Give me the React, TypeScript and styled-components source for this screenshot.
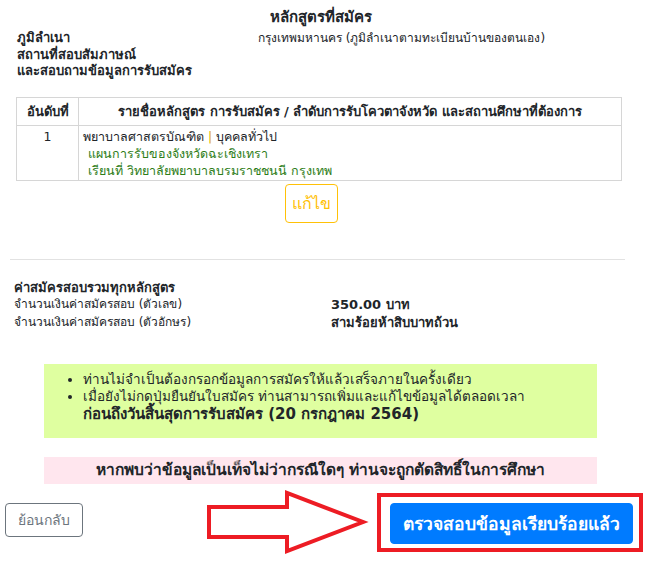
import React from 'react';
import styled, { createGlobalStyle } from 'styled-components';

const GlobalStyle = createGlobalStyle`
  body {
    margin: 0;
    background: white;
    color: #212529;
    font-family: Tahoma, "DejaVu Sans", "Noto Sans", sans-serif;
    font-size: 13px;
  }
`

const course = {
  name: 'พยาบาลศาสตรบัณฑิต',
  type: 'บุคคลทั่วไป',
  plan: 'แผนการรับของจังหวัดฉะเชิงเทรา',
  school: 'เรียนที่ วิทยาลัยพยาบาลบรมราชชนนี กรุงเทพ',
}

export default function App() {
  return <Page>
    <GlobalStyle />
    <Title>หลักสูตรที่สมัคร</Title>
    <Info>
      <div className='label'>ภูมิลำเนา</div>
      <div className='value'>กรุงเทพมหานคร (ภูมิลำเนาตามทะเบียนบ้านของตนเอง)</div>
      <div className='label'>สถานที่สอบสัมภาษณ์<br />และสอบถามข้อมูลการรับสมัคร</div>
      <div></div>
    </Info>

    <Table>
      <thead>
        <tr>
          <th className='no'>อันดับที่</th>
          <th>รายชื่อหลักสูตร การรับสมัคร / ลำดับการรับโควตาจังหวัด และสถานศึกษาที่ต้องการ</th>
        </tr>
      </thead>
      <tbody>
        <tr>
          <td className='no'>1</td>
          <td>
            {course.name} <span className='sep'>|</span> {course.type}
            <div className='sub'>{course.plan}</div>
            <div className='sub'>{course.school}</div>
          </td>
        </tr>
      </tbody>
    </Table>

    <EditRow><EditButton>แก้ไข</EditButton></EditRow>

    <Rule />

    <Fee>
      <div className='head'>ค่าสมัครสอบรวมทุกหลักสูตร</div>
      <div>จำนวนเงินค่าสมัครสอบ (ตัวเลข)</div>
      <div className='value'>350.00 บาท</div>
      <div>จำนวนเงินค่าสมัครสอบ (ตัวอักษร)</div>
      <div className='value'>สามร้อยห้าสิบบาทถ้วน</div>
    </Fee>

    <Notice>
      <ul>
        <li>ท่านไม่จำเป็นต้องกรอกข้อมูลการสมัครให้แล้วเสร็จภายในครั้งเดียว</li>
        <li>เมื่อยังไม่กดปุ่มยืนยันใบสมัคร ท่านสามารถเพิ่มและแก้ไขข้อมูลได้ตลอดเวลา<br />
          <b>ก่อนถึงวันสิ้นสุดการรับสมัคร (20 กรกฎาคม 2564)</b></li>
      </ul>
    </Notice>

    <Warning>หากพบว่าข้อมูลเป็นเท็จไม่ว่ากรณีใดๆ ท่านจะถูกตัดสิทธิ์ในการศึกษา</Warning>

    <Footer>
      <BackButton>ย้อนกลับ</BackButton>
      <Arrow width='164' height='66' viewBox='0 0 164 66'>
        <polygon points='4,18 82,18 82,4 158,33 82,62 82,48 4,48'
          fill='white' stroke='#ed1c24' strokeWidth='4' strokeLinejoin='miter' />
      </Arrow>
      <Highlight>
        <ConfirmButton>ตรวจสอบข้อมูลเรียบร้อยแล้ว</ConfirmButton>
      </Highlight>
    </Footer>
  </Page>
}

const Page = styled.div`
  width: 651px;
  height: 561px;
  overflow: hidden;
  box-sizing: border-box;
  padding-top: 9px;
`

const Title = styled.div`
  text-align: center;
  font-weight: bold;
  font-size: 15px;
  line-height: 17px;
  padding-left: 6px;
  width: 630px;
`

const Info = styled.div`
  display: grid;
  grid-template-columns: 241px 1fr;
  padding-left: 17px;
  margin-top: 4px;
  line-height: 16.5px;
  .label { font-weight: bold; }
  .value { font-size: 12px; }
`

const Table = styled.table`
  margin: 17px 0 0 16px;
  width: 606px;
  border-collapse: collapse;
  th, td {
    border: 1px solid #d6d6d6;
    line-height: 17px;
  }
  th {
    font-weight: bold;
    height: 27px;
    padding: 0 4px;
  }
  td {
    font-size: 12.5px;
    padding: 2px 4px 1px;
    vertical-align: top;
  }
  .no {
    width: 53px;
    text-align: center;
  }
  .sep { color: #e0a800; }
  .sub {
    color: #2d7d17;
    padding-left: 5px;
  }
`

const EditRow = styled.div`
  display: flex;
  justify-content: center;
  width: 622px;
  padding-top: 3px;
`

const EditButton = styled.button`
  font-family: inherit;
  font-size: 16px;
  color: #ffc107;
  background: white;
  border: 1px solid #ffc107;
  border-radius: 4px;
  width: 53px;
  height: 39px;
  padding: 0;
`

const Rule = styled.hr`
  border: 0;
  border-top: 1px solid #e2e2e2;
  margin: 36px 0 0 10px;
  width: 615px;
`

const Fee = styled.div`
  display: grid;
  grid-template-columns: 317px 1fr;
  padding-left: 14px;
  margin-top: 19px;
  line-height: 17.5px;
  font-size: 12px;
  .head {
    grid-column: 1 / 3;
    font-weight: bold;
    font-size: 13px;
  }
  .value { font-weight: bold; font-size: 13px; }
`

const Notice = styled.div`
  margin: 33px 0 0 44px;
  width: 553px;
  height: 74px;
  box-sizing: border-box;
  background: #dfffa0;
  padding-top: 7px;
  font-size: 13.5px;
  line-height: 17px;
  ul {
    margin: 0;
    padding-left: 39px;
  }
  b { font-size: 15px; line-height: 19px; }
`

const Warning = styled.div`
  margin: 19px 0 0 44px;
  width: 553px;
  height: 27px;
  line-height: 27px;
  background: #ffe6ee;
  text-align: center;
  font-weight: bold;
  font-size: 15.5px;
`

const Footer = styled.div`
  position: relative;
  display: flex;
  justify-content: space-between;
  align-items: center;
  margin-top: 9px;
  padding: 0 8px 0 5px;
`

const BackButton = styled.button`
  font-family: inherit;
  font-size: 14px;
  color: #6c757d;
  background: white;
  border: 1px solid #6c757d;
  border-radius: 4px;
  width: 78px;
  height: 34px;
  padding: 0;
  margin-bottom: 6px;
`

const Arrow = styled.svg`
  position: absolute;
  left: 205px;
  top: -4px;
`

const Highlight = styled.div`
  border: 4px solid #ed1c24;
  padding: 6px 6px 4px 9px;
`

const ConfirmButton = styled.button`
  font-family: inherit;
  font-size: 17.5px;
  font-weight: bold;
  color: white;
  background: #007bff;
  border: 1px solid #007bff;
  border-radius: 4px;
  width: 243px;
  height: 41px;
  padding: 0;
  display: block;
`
